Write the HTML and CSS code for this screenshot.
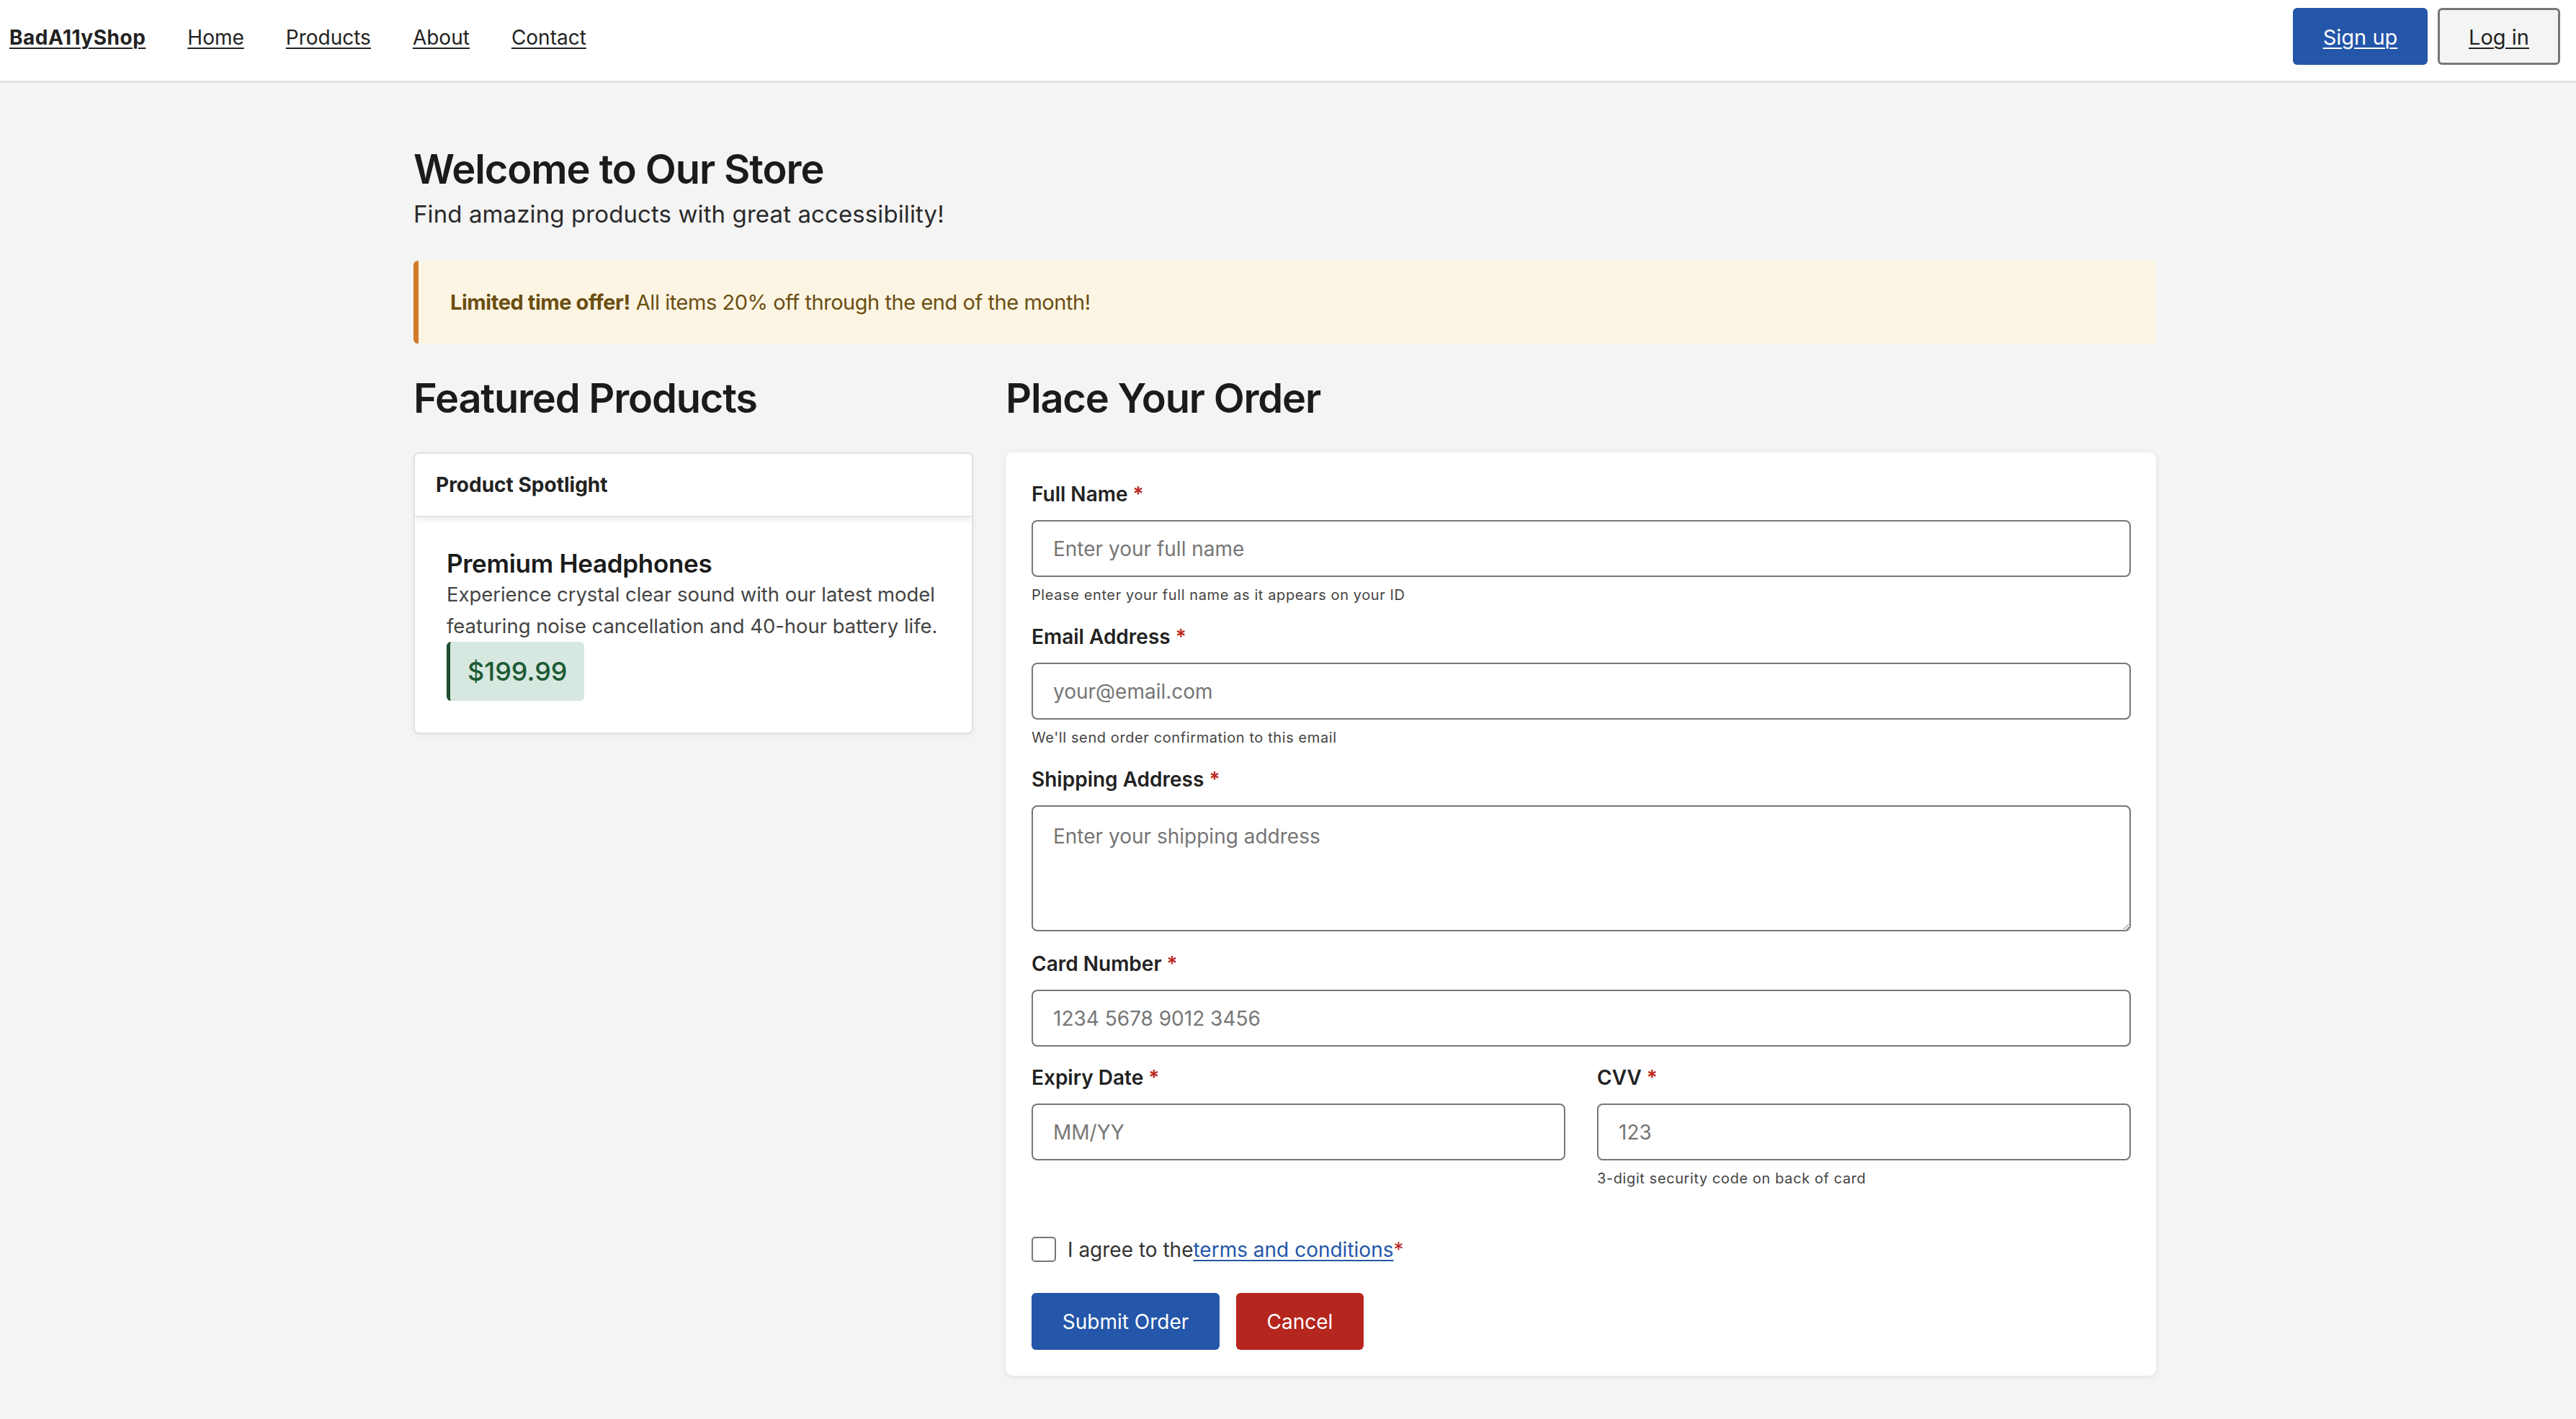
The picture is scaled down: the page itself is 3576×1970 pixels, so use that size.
FILE: index.html
```html
<!DOCTYPE html>
<html lang="en">
<head>
<meta charset="utf-8">
<title>BadA11yShop</title>
<link rel="stylesheet" href="styles.css">
</head>
<body>
<header class="topbar">
  <nav class="nav">
    <a class="logo" href="#">BadA11yShop</a>
    <a class="nav-link" href="#">Home</a>
    <a class="nav-link" href="#">Products</a>
    <a class="nav-link" href="#">About</a>
    <a class="nav-link" href="#">Contact</a>
  </nav>
  <div class="auth">
    <a class="btn-signup" href="#">Sign up</a>
    <a class="btn-login" href="#">Log in</a>
  </div>
</header>

<main class="main">
  <h1 class="title">Welcome to Our Store</h1>
  <p class="subtitle">Find amazing products with great accessibility!</p>

  <div class="notice"><strong>Limited time offer!</strong> All items 20% off through the end of the month!</div>

  <div class="columns">
    <section class="col-left">
      <h2 class="section-title">Featured Products</h2>
      <div class="product-card">
        <div class="product-head">Product Spotlight</div>
        <div class="product-body">
          <h3 class="product-name">Premium Headphones</h3>
          <p class="product-desc">Experience crystal clear sound with our latest model featuring noise cancellation and 40-hour battery life.</p>
          <div class="price">$199.99</div>
        </div>
      </div>
    </section>

    <section class="col-right">
      <h2 class="section-title">Place Your Order</h2>
      <form class="order-card">
        <div class="field">
          <label class="label">Full Name <span class="req">*</span></label>
          <input class="input" type="text" placeholder="Enter your full name">
          <div class="help">Please enter your full name as it appears on your ID</div>
        </div>
        <div class="field">
          <label class="label">Email Address <span class="req">*</span></label>
          <input class="input" type="text" placeholder="your@email.com">
          <div class="help">We'll send order confirmation to this email</div>
        </div>
        <div class="field">
          <label class="label">Shipping Address <span class="req">*</span></label>
          <textarea class="input textarea" placeholder="Enter your shipping address"></textarea>
        </div>
        <div class="field field-tight">
          <label class="label">Card Number <span class="req">*</span></label>
          <input class="input" type="text" placeholder="1234 5678 9012 3456">
        </div>
        <div class="field-row">
          <div class="field">
            <label class="label">Expiry Date <span class="req">*</span></label>
            <input class="input" type="text" placeholder="MM/YY">
          </div>
          <div class="field">
            <label class="label">CVV <span class="req">*</span></label>
            <input class="input" type="text" placeholder="123">
            <div class="help">3-digit security code on back of card</div>
          </div>
        </div>
        <div class="agree">
          <input class="check" type="checkbox">
          <span class="agree-text">I agree to the<a class="terms" href="#">terms and conditions</a><span class="req">*</span></span>
        </div>
        <div class="actions">
          <button class="btn btn-submit" type="button">Submit Order</button>
          <button class="btn btn-cancel" type="button">Cancel</button>
        </div>
      </form>
    </section>
  </div>
</main>
</body>
</html>
```

FILE: styles.css
```css
* { box-sizing: border-box; }

html, body {
  margin: 0;
  padding: 0;
}

body {
  background: #f4f4f4;
  font-family: Inter, "Noto Sans", "Liberation Sans", sans-serif;
  color: #222;
  min-height: 1970px;
}

.topbar {
  display: flex;
  align-items: center;
  justify-content: space-between;
  background: #fff;
  height: 115px;
  padding: 12px 22px 24px 13px;
  border-bottom: 3px solid #e2e2e2;
}

.nav {
  display: flex;
  align-items: center;
  gap: 58px;
  font-size: 28px;
  padding-top: 4px;
}

.nav a {
  color: #222;
  text-decoration: underline;
  text-underline-offset: 4px;
  text-decoration-thickness: 2px;
}

.logo { font-weight: 700; letter-spacing: 0.5px; }

.auth {
  display: flex;
  gap: 14px;
}

.btn-signup, .btn-login {
  display: flex;
  align-items: center;
  justify-content: center;
  height: 79px;
  font-size: 29px;
  border-radius: 6px;
  text-decoration: underline;
  text-underline-offset: 4px;
  text-decoration-thickness: 2px;
  padding-top: 2px;
}

.btn-signup {
  width: 187px;
  background: #2456a9;
  color: #fff;
}

.btn-login {
  width: 170px;
  background: #f4f4f4;
  color: #222;
  border: 3px solid #767676;
}

.main {
  padding: 87px 583px 60px 574px;
}

.title {
  margin: 0;
  font-size: 56px;
  line-height: 67px;
  font-weight: 600;
  color: #1b1b1b;
  letter-spacing: -1.1px;
}

.subtitle {
  margin: 4px 0 0;
  font-size: 33px;
  line-height: 48px;
  color: #2a2a2a;
  letter-spacing: 0.1px;
}

.notice {
  margin-top: 41px;
  height: 115px;
  display: flex;
  align-items: center;
  padding-left: 44px;
  background: #fdf5e3;
  border-left: 7px solid #d17a2c;
  border-radius: 6px;
  color: #6b4e12;
  font-size: 29px;
  letter-spacing: -0.45px;
}

.notice strong { font-weight: 700; margin-right: 8px; }

.columns {
  display: grid;
  grid-template-columns: 777px 1fr;
  column-gap: 45px;
  margin-top: 43px;
}

.section-title {
  margin: 0 0 41px;
  font-size: 56px;
  line-height: 67px;
  font-weight: 600;
  color: #1b1b1b;
  letter-spacing: -1.2px;
}

.product-card {
  background: #fff;
  border: 2px solid #e1e1e1;
  border-radius: 8px;
  box-shadow: 0 2px 6px rgba(0,0,0,0.06);
  overflow: hidden;
}

.product-head {
  padding: 26px 29px 26px;
  font-size: 28px;
  line-height: 34px;
  font-weight: 700;
  color: #222;
  border-bottom: 2px solid #e4e4e4;
  box-shadow: 0 4px 8px rgba(0,0,0,0.07);
  position: relative;
}

.product-body {
  padding: 43px 44px 44px;
}

.product-name {
  margin: 0;
  font-size: 35px;
  line-height: 42px;
  font-weight: 600;
  color: #1b1b1b;
  letter-spacing: -0.3px;
}

.product-desc {
  margin: 0;
  font-size: 27.5px;
  line-height: 44px;
  color: #444;
  letter-spacing: -0.05px;
}

.price {
  display: inline-block;
  height: 82px;
  padding: 19px 23px 19px 24px;
  font-size: 36px;
  line-height: 44px;
  font-weight: 500;
  color: #1d5a35;
  background: #d6e8df;
  border-left: 5px solid #1e4d2e;
  border-radius: 6px;
}

.order-card {
  background: #fff;
  border-radius: 10px;
  box-shadow: 0 2px 8px rgba(0,0,0,0.08);
  padding: 41px 35px 36px 36px;
}

.field { margin-bottom: 28px; }
.field-tight { margin-bottom: 26px; }

.field-row {
  display: grid;
  grid-template-columns: 1fr 1fr;
  column-gap: 44px;
}

.label {
  display: block;
  font-size: 28px;
  line-height: 34px;
  font-weight: 600;
  color: #222;
  margin-bottom: 19px;
}

.req { color: #c0281f; }

.input {
  display: block;
  width: 100%;
  height: 79px;
  padding: 0 28px;
  font-family: inherit;
  font-size: 28px;
  color: #222;
  background: #fff;
  border: 2px solid #767676;
  border-radius: 8px;
  outline: none;
}

.input::placeholder { color: #767676; }

.textarea {
  height: 175px;
  padding: 24px 28px;
  line-height: 34px;
  resize: vertical;
}

.help {
  margin-top: 12px;
  font-size: 20px;
  line-height: 26px;
  color: #444;
  letter-spacing: 0.6px;
}

.agree {
  display: flex;
  align-items: center;
  margin-top: 40px;
  gap: 16px;
}

.check {
  appearance: none;
  -webkit-appearance: none;
  margin: 0;
  width: 34px;
  height: 35px;
  border: 2px solid #767676;
  border-radius: 5px;
  background: #fff;
}

.agree-text {
  font-size: 28px;
  line-height: 34px;
  color: #333;
}

.terms {
  color: #2456a9;
  text-decoration: underline;
  text-underline-offset: 4px;
  text-decoration-thickness: 2px;
}

.actions {
  display: flex;
  gap: 23px;
  margin-top: 43px;
}

.btn {
  height: 79px;
  padding: 0 40px;
  font-family: inherit;
  font-size: 28px;
  color: #fff;
  border: none;
  border-radius: 6px;
  white-space: nowrap;
}

.btn-submit { background: #2456a9; min-width: 261px; }
.btn-cancel { background: #b5261e; min-width: 177px; }
```
